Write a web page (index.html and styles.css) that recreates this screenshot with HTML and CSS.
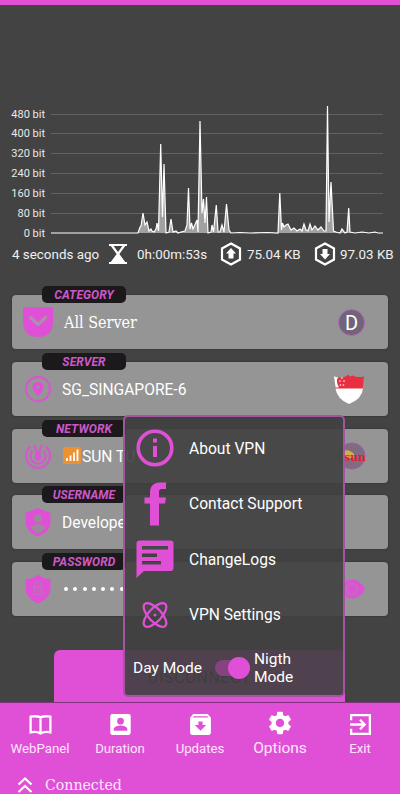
FILE: index.html
```html
<!DOCTYPE html>
<html lang="en">
<head>
<meta charset="utf-8">
<title>VPN</title>
<link rel="stylesheet" href="styles.css">
</head>
<body>
<div class="screen">
  <header class="topbar"></header>
  <svg class="chart" viewBox="0 6 400 234" width="400" height="234">
    <g class="grid">
      <path d="M51 114.500H383M51 133.500H383M51 153.500H383M51 173.500H383M51 193.500H383M51 213.500H383"/>
    </g>
    <g class="ticks">
      <text x="45" y="117.500">480 bit</text><text x="45" y="137">400 bit</text><text x="45" y="157">320 bit</text><text x="45" y="177">240 bit</text><text x="45" y="196.500">160 bit</text><text x="45" y="216.500">80 bit</text><text x="45" y="236.500">0 bit</text>
    </g>
    <path class="trace" d="M51 233H138L140 227L141 226L143 213L145 225L147 222L149 231L151 229L152 231L154 232L156 229L157 223L158.500 231L160.700 144L162.500 217L164 164L166 233L169 232L171 219L173 232L176 231L178 233L181 232L185 231L187 225L188.500 188L190 229L191.500 223L193 229L197 220L198 232L200 121L202 213L203.500 199L205 223L206.500 197L208 233L211 232L212 225L213.500 232L216.300 205L218 232L220 232L222 225L224 232L226.500 204L229 230L231 233L240 232.500L250 233L268 232.500L278 233L279.800 193L281.500 230L282.500 223L284 227L286 225L288 224L291 230L294 228L297 231L300 229L302 231L304 224L306 230L308 231L310 224L312 230L315 226L318 230L321 227L324 231L326 231L327.500 106L329 222L331 182L333.500 231L336 232L340 233L342 229L345 233L347 232L348.700 208L350 232L355 233L362 232L369 233L375 232L378 233H383"/>
  </svg>
  <div class="stats">
    <span class="ago">4 seconds ago</span>
    <svg class="glass" viewBox="0 0 18 20" width="18" height="20"><path d="M0 1H18M0 19H18" class="ln"/><path d="M2.500 1L9 10L15.500 1M2.500 19L9 10L15.500 19" class="ln"/><path d="M9 10L16 19H2z" fill="#fff"/></svg>
    <span class="time">0h:00m:53s</span>
    <svg class="hex" viewBox="0 0 22 24" width="22" height="24"><path d="M11 1.500L20 6.500V17.500L11 22.500L2 17.500V6.500z" class="ln"/><path d="M11 6L16 11.500H13.500V16.500H8.500V11.500H6z" fill="#fff"/></svg>
    <span class="up">75.04 KB</span>
    <svg class="hex" viewBox="0 0 22 24" width="22" height="24"><path d="M11 1.500L20 6.500V17.500L11 22.500L2 17.500V6.500z" class="ln"/><path d="M11 17.500L16 12H13.500V7H8.500V12H6z" fill="#fff"/></svg>
    <span class="down">97.03 KB</span>
  </div>

  <main class="fields">
    <section class="card">
      <span class="tag">CATEGORY</span>
      <svg class="lead" viewBox="0 0 32 32" width="32" height="32"><path class="pk" d="M3 1H29Q31 1 31 3V15Q31 31 16 31T1 15V3Q1 1 3 1z"/><path d="M8.500 11.500L16 18.500L23.500 11.500" fill="none" stroke="#b08dae" stroke-width="3.500" stroke-linecap="round" stroke-linejoin="round"/></svg>
      <span class="value serif">All Server</span>
      <span class="letter">D</span>
    </section>
    <section class="card">
      <span class="tag">SERVER</span>
      <svg class="lead" viewBox="0 0 32 32" width="32" height="32"><circle cx="16" cy="16" r="12" class="pl"/><path class="pk" fill-rule="evenodd" d="M16 9C12 9 10.500 12 10.500 14C10.500 17.500 13.500 19.500 16 23.500C18.500 19.500 21.500 17.500 21.500 14C21.500 12 20 9 16 9zM16 12.200A1.800 1.800 0 1 1 16 15.800A1.800 1.800 0 1 1 16 12.200z"/></svg>
      <span class="value">SG_SINGAPORE-6</span>
      <svg class="flag" viewBox="0 0 32 32" width="32" height="32"><path fill="#e82f40" d="M2 4Q7 5 11 4Q13 3.500 15 1.500L17 3.500L20 2.500Q24 5 31 3.500L29.500 17H3z"/><path fill="#fff" d="M2.500 15.500H30Q29 26 16 31Q4 26 2.500 15.500z"/><path fill="#fff" d="M5 4Q2 4.500 1 3L2.500 14Q4 15 6 14Q2.500 9 5 4z"/><g fill="#fff"><circle cx="9" cy="5" r=".8"/><circle cx="7" cy="8" r=".8"/><circle cx="11" cy="8" r=".8"/><circle cx="7.500" cy="12" r=".8"/><circle cx="10.500" cy="12" r=".8"/></g></svg>
    </section>
    <section class="card">
      <span class="tag">NETWORK</span>
      <svg class="lead" viewBox="0 0 32 32" width="32" height="32"><path class="pl" d="M8.500 6.500A12 12 0 1 0 23.500 6.500M10.500 11A7.500 7.500 0 1 0 21.500 11"/><path class="pl thick" d="M12.500 5L16 17L19.500 5"/><circle cx="16" cy="17" r="3.200" class="pk"/></svg>
      <svg class="signal" viewBox="0 0 18 17" width="18" height="17"><rect width="18" height="17" rx="2" fill="#ee9130"/><path d="M4 11V14M7.500 8.500V14M11 5.500V14M14.500 2.500V14" stroke="#fff" stroke-width="1.800"/></svg>
      <span class="value network">SUN TU <span class="shade">50 IP FLP 5002</span></span>
      <svg class="sun" viewBox="0 0 32 28" width="32" height="28"><circle cx="16" cy="14" r="13" fill="#806b82" stroke="#9a5f99"/><path d="M5 13Q10 4 18 12V16H5z" fill="#d9ac42"/><text x="19" y="18.500" textLength="22" lengthAdjust="spacingAndGlyphs">sun</text></svg>
    </section>
    <section class="card">
      <span class="tag">USERNAME</span>
      <svg class="lead" viewBox="0 0 32 32" width="32" height="32"><path class="pk" d="M16 2L28.500 7V15Q28.500 26 16 30.500Q3.500 26 3.500 15V7z"/><circle cx="16" cy="12.500" r="4" fill="#9b8b9a"/><path d="M8.500 21.500Q16 14.500 23.500 21.500Q21 25.500 16 27.500Q11 25.500 8.500 21.500z" fill="#9b8b9a"/></svg>
      <span class="value">Develope<span class="shade">rRG</span></span>
    </section>
    <section class="card">
      <span class="tag">PASSWORD</span>
      <svg class="lead" viewBox="0 0 32 32" width="32" height="32"><path class="pk" d="M16 1.500Q21 6 28.500 6V16Q28.500 25 16 30.500Q3.500 25 3.500 16V6Q11 6 16 1.500z"/><path d="M13 14.500V12Q13 9 16 9T19 12V14.500M12 14.500H20V21H12z" fill="none" stroke="#b873b4" stroke-width="1.600"/><circle cx="16" cy="17.700" r="1.200" fill="#b873b4"/></svg>
      <span class="dots"><i></i><i></i><i></i><i></i><i></i><i></i><i></i><i></i></span>
      <svg class="eye" viewBox="0 0 26 20" width="26" height="20"><path class="pk" d="M0 10Q5 .5 13 .5T26 10Q21 19.500 13 19.500T0 10z"/><circle cx="13" cy="10" r="5.500" fill="none" stroke="#b873b4" stroke-width="2"/></svg>
    </section>
  </main>
  <div class="connect">DISCONNECT</div>

  <nav class="nav">
    <div class="tab"><svg viewBox="0 0 24 24" width="25" height="25"><path d="M12 5C9 4 5 4 2.500 4.500V19.500C5 19 9 19 12 20.500C15 19 19 19 21.500 19.500V4.500C19 4 15 4 12 5zM12 5V20" class="ln"/></svg><span>WebPanel</span></div>
    <div class="tab"><svg viewBox="0 0 24 24" width="25" height="25"><rect x="2.200" y="2" width="19.600" height="20" rx="2" fill="#fff"/><circle cx="12" cy="8.800" r="3.200" fill="#df50d6"/><path d="M5.500 18V16.500C5.500 14 10 13 12 13S18.500 14 18.500 16.500V18z" fill="#df50d6"/></svg><span>Duration</span></div>
    <div class="tab"><svg viewBox="0 0 24 24" width="25" height="25"><path fill="#fff" fill-rule="evenodd" d="M5 2H19L22 5.500V20Q22 22 20 22H4Q2 22 2 20V5.500zM5.500 4L4.500 5.200H19.500L18.500 4zM10 9V12.500H6.500L12 18L17.500 12.500H14V9z"/></svg><span>Updates</span></div>
    <div class="tab active"><svg viewBox="0 0 24 24" width="28" height="28"><path fill="#fff" d="M19.140 12.940c.04-.3.06-.61.06-.94 0-.32-.02-.64-.07-.94l2.030-1.580c.18-.14.23-.41.12-.61l-1.920-3.320c-.12-.22-.37-.29-.59-.22l-2.390.96c-.5-.38-1.030-.7-1.620-.94l-.36-2.540c-.04-.24-.24-.41-.48-.41h-3.840c-.24 0-.43.17-.47.41l-.36 2.540c-.59.24-1.130.57-1.620.94l-2.390-.96c-.22-.08-.47 0-.59.22L2.740 8.870c-.12.21-.08.47.12.61l2.030 1.580c-.05.3-.09.63-.09.94s.02.64.07.94l-2.030 1.580c-.18.14-.23.41-.12.61l1.920 3.320c.12.22.37.29.59.22l2.390-.96c.5.38 1.030.7 1.620.94l.36 2.540c.05.24.24.41.48.41h3.840c.24 0 .44-.17.47-.41l.36-2.540c.59-.24 1.130-.56 1.620-.94l2.390.96c.22.08.47 0 .59-.22l1.920-3.320c.12-.22.07-.47-.12-.61l-2.010-1.580zM12 15.600c-1.980 0-3.600-1.620-3.600-3.600s1.620-3.600 3.600-3.600 3.600 1.620 3.600 3.600-1.620 3.600-3.600 3.600z"/></svg><span>Options</span></div>
    <div class="tab"><svg viewBox="0 0 24 24" width="25" height="25"><path class="ln" d="M3 8V3H21V21H3V16M2 12H16M11.500 7.500L16 12L11.500 16.500"/></svg><span>Exit</span></div>
  </nav>
  <footer class="status"><svg viewBox="0 0 16 18" width="16" height="18"><path class="ln" d="M1.500 8.500L8 2.500L14.500 8.500M1.500 16L8 10L14.500 16"/></svg><span>Connected</span></footer>

  <div class="menu">
    <div class="item"><svg viewBox="0 0 38 38" width="38" height="38"><circle cx="19" cy="19" r="16.800" fill="none" stroke="#df50d6" stroke-width="3.600"/><path class="pk" d="M17 9.500H21V13.500H17zM17 17H21V28H17z"/></svg><span>About VPN</span></div>
    <div class="item"><svg viewBox="0 0 38 44" width="38" height="44"><path class="pk" d="M14 43.500V21.500H8.500V15.500H14V11C14 4 17.500 .5 24 .5H30V7H26.500C23.500 7 23 8 23 10.500V15.500H30L29 21.500H23V43.500z"/></svg><span>Contact Support</span></div>
    <div class="item"><svg viewBox="0 0 38 38" width="38" height="38"><path class="pk" fill-rule="evenodd" d="M3.500 .5H34.500Q37.500 .5 37.500 3.500V28Q37.500 31 34.500 31H8L.5 38V3.500Q.5 .5 3.500 .5zM6 6V9.500H32V6zM6 13.500V17H21V13.500zM6 21V24.500H25V21z"/></svg><span>ChangeLogs</span></div>
    <div class="item"><svg viewBox="0 0 38 38" width="38" height="38"><g fill="none" stroke="#df50d6" stroke-width="2.300"><ellipse cx="19" cy="19" rx="15" ry="6.500" transform="rotate(47 19 19)"/><ellipse cx="19" cy="19" rx="15" ry="6.500" transform="rotate(-47 19 19)"/></g><circle cx="19" cy="19" r="1.500" class="pk"/></svg><span>VPN Settings</span></div>
    <div class="mode"><span class="day">Day Mode</span><span class="switch"></span><span class="night">Nigth<br>Mode</span></div>
  </div>
</div>
</body>
</html>
```
FILE: styles.css
```css
* { box-sizing: border-box; }
body { margin: 0; background: #fff; font-family: Roboto, sans-serif; color: #fff; }
.screen { position: relative; width: 400px; height: 800px; background: #434343; display: flex; flex-direction: column; overflow: hidden; white-space: nowrap; }
.screen svg { flex: none; display: block; }
.topbar { height: 6px; flex: none; background: #df50d6; border-bottom: 1px solid #61325f; }
.pk { fill: #df50d6; }
.pl { fill: none; stroke: #d35acb; stroke-width: 2.300; }
.thick { stroke-width: 2.600; }
.ln { fill: none; stroke: #fff; stroke-width: 2.200; }
.grid { stroke: #626262; stroke-width: 1; }
.ticks { fill: #e8e8e8; font-size: 11px; text-anchor: end; }
.trace { fill: rgba(255,255,255,.5); stroke: #fff; stroke-width: 1.200; }
.stats { height: 28px; flex: none; padding-left: 12px; display: flex; align-items: center; font-size: 13.400px; color: #f0f0f0; }
.ago { width: 97px; }
.time { width: 83px; margin-left: 10px; }
.up { width: 67px; margin-left: 5px; }
.down { margin-left: 4px; }
.fields { margin: 27px 12px 0; display: flex; flex-direction: column; gap: 12.750px; }
.card { position: relative; height: 54px; border-radius: 4px; background: #959595; box-shadow: 0 0 2px #292929; display: flex; align-items: center; padding: 0 20px 0 10px; }
.tag { position: absolute; left: 30px; top: -9px; width: 84px; height: 17px; border-radius: 5px; background: #1b191b; color: #ce57c8; font: italic bold 12px/19px Roboto, sans-serif; letter-spacing: .1px; text-align: center; }
.value { margin-left: 8px; padding-top: 2px; font-size: 15.600px; }
.serif { font: 16px "DejaVu Serif Condensed", "DejaVu Serif", serif; margin-left: 10px; padding-top: 0; }
.shade { color: #a0a0a0; }
.letter { margin-left: auto; margin-right: 3px; width: 27px; height: 27px; border: 1px solid #b765b3; border-radius: 50%; background: #70637a; text-align: center; font-size: 20px; line-height: 26px; }
.flag { margin-left: auto; margin-right: 3px; }
.signal { margin-left: 9px; }
.network { margin-left: 1px; }
.sun { margin-left: auto; margin-right: .500px; }
.sun text { font: bold 11px "DejaVu Serif", serif; fill: #e32230; text-anchor: middle; }
.dots { margin-left: 10px; display: flex; gap: 5.300px; }
.dots i { width: 4px; height: 4px; border-radius: 50%; background: #fff; }
.dots i:last-child { background: #a0a0a0; }
.eye { margin-left: auto; margin-right: 3px; }
.connect { margin: 34px 55px 0 54px; height: 52px; flex: none; border-radius: 6px 6px 0 0; background: #df50d6; color: #2c2c2c; font-size: 16px; line-height: 56px; text-align: center; letter-spacing: .6px; }
.nav { height: 66px; flex: none; background: #df50d6; border-top: 1px solid #7d347a; display: grid; grid-template-columns: repeat(5, 80px); }
.tab { display: flex; flex-direction: column; align-items: center; padding-top: 9px; font-size: 13.200px; line-height: 16px; color: #ffe6fd; gap: 4px; }
.active { font-size: 15.500px; padding-top: 6px; gap: 3px; }
.status { height: 26px; flex: none; background: #df50d6; display: flex; align-items: center; padding: 7px 0 0 17px; gap: 12px; font: 15.700px "DejaVu Serif Condensed", "DejaVu Serif", serif; color: #ffe6fd; }
.screen::after { content: ""; flex: 1 0 auto; background: #fff; }
.menu { position: absolute; left: 123px; top: 415px; width: 222px; height: 282px; border: 2px solid #a4559f; border-radius: 5px; background: rgba(65,65,65,.915); padding-top: 3.500px; }
.item { height: 55.500px; display: flex; align-items: center; padding-left: 11px; gap: 15px; font-size: 15.600px; }
.item span { padding-top: 1px; }
.mode { height: 51px; display: flex; align-items: center; padding-left: 8px; font-size: 15.500px; line-height: 18px; }
.day { width: 80px; }
.switch { position: relative; width: 35px; height: 16px; border-radius: 8px; background: #86437f; margin-left: 2px; }
.switch::after { content: ""; position: absolute; right: 0; top: -3px; width: 22px; height: 22px; border-radius: 50%; background: #df50d6; }
.night { margin-left: 4px; }
```
